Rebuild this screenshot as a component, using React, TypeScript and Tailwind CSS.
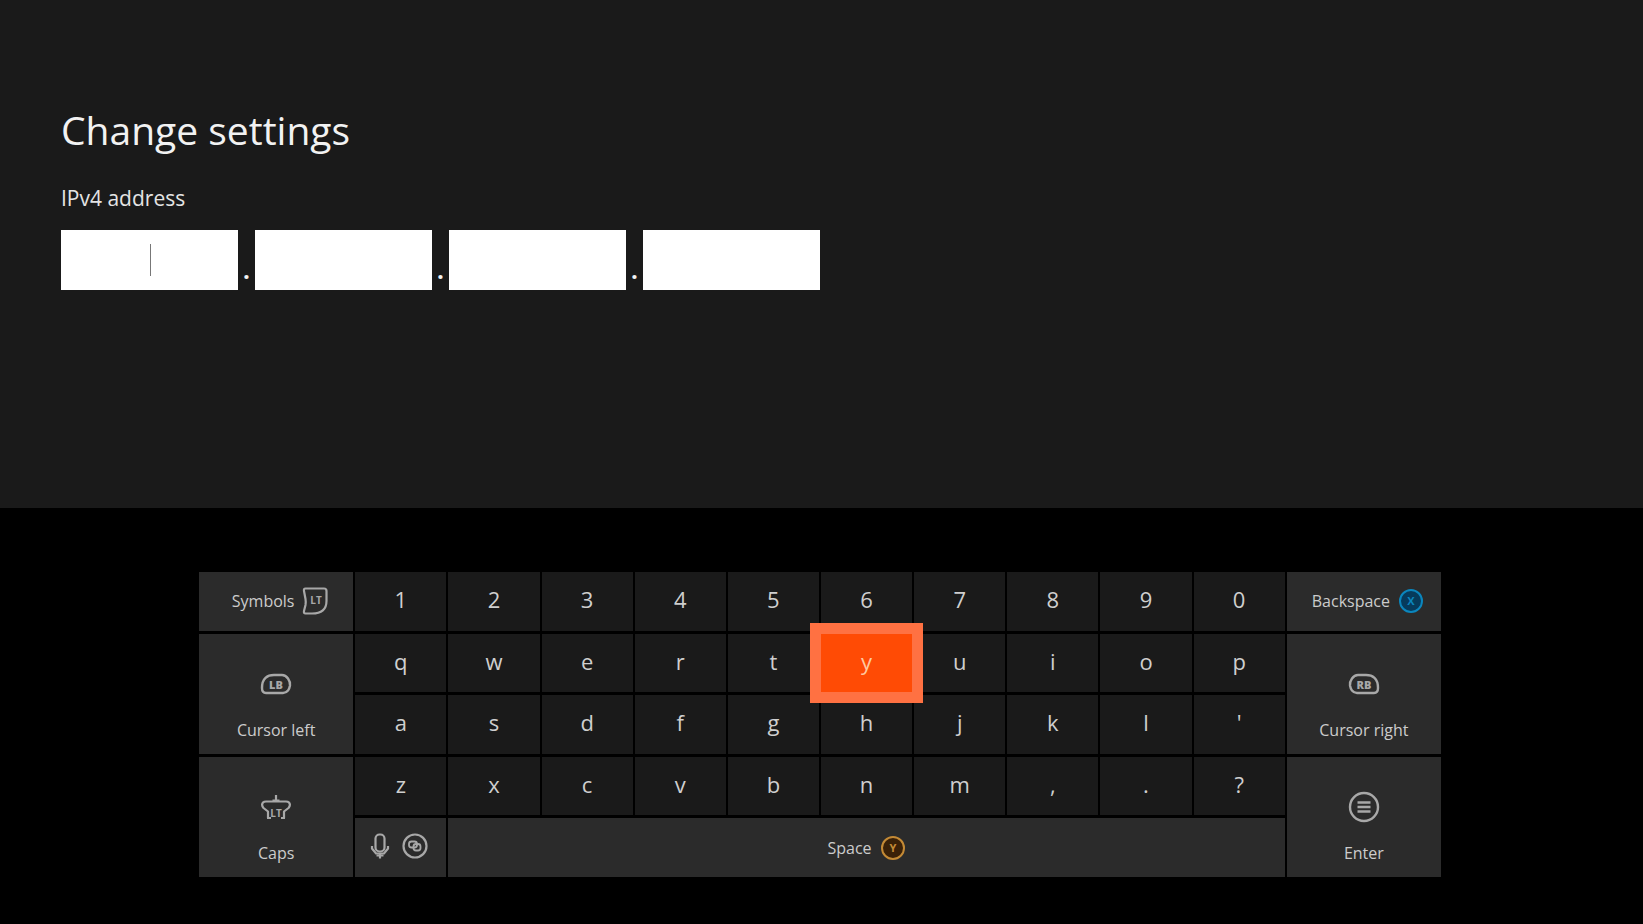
import { useState } from 'react';

const rows = [
  ['1', '2', '3', '4', '5', '6', '7', '8', '9', '0'],
  ['q', 'w', 'e', 'r', 't', 'y', 'u', 'i', 'o', 'p'],
  ['a', 's', 'd', 'f', 'g', 'h', 'j', 'k', 'l', "'"],
  ['z', 'x', 'c', 'v', 'b', 'n', 'm', ',', '.', '?'],
];

const sideKey = 'bg-[#2b2b2b] text-[#cccccc] text-[16px] leading-6 font-medium';
const tallKey = 'row-span-2 flex flex-col items-center justify-end gap-[18px] pb-3';

function LeftTrigger() {
  return (
    <svg width="26" height="28" viewBox="0 0 26 28" fill="none" stroke="#a8a8a8" strokeWidth="2.2" aria-hidden="true">
      <path d="M3.500 1.500H22Q24.500 1.500 24.500 4V14Q24.500 26.500 10 26.500H3.500Q1.500 26.500 2 24L3.500 18Q4 15 3.500 12L2 4Q1.500 1.500 3.500 1.500Z" />
      <text x="14" y="17" textAnchor="middle" fontSize="10" fontWeight="700" fill="#a8a8a8" stroke="none">LT</text>
    </svg>
  );
}

function Bumper({ label, flip }: { label: string; flip?: boolean }) {
  return (
    <svg width="32" height="32" viewBox="0 0 32 32" fill="none" stroke="#a8a8a8" strokeWidth="2.4" aria-hidden="true">
      <path
        transform={flip ? 'matrix(-1 0 0 1 32 0)' : undefined}
        d="M14 7H22Q25.500 7 28 10.500Q30.500 14 30 17.500Q29.500 20.500 28 22.500Q26 25 23 25H6Q2 25 2 20Q2 13 5.500 9.800Q8.500 7 14 7Z"
      />
      <text x="16" y="20.500" textAnchor="middle" fontSize="11" fontWeight="800" fill="#a8a8a8" stroke="none">{label}</text>
    </svg>
  );
}

function LeftStick() {
  return (
    <svg width="32" height="32" viewBox="0 0 32 32" fill="none" stroke="#a8a8a8" strokeWidth="2.2" strokeLinejoin="round" aria-hidden="true">
      <path d="M16 4V11M12.500 9.500H19.500" />
      <path d="M8 27V20.500L3.500 17Q1 14 3 11.500Q4 10.500 6 10.500H26Q28 10.500 29 11.500Q31 14 28.500 17L24 20.500V27" />
      <path d="M7 27H11M21 27H25" />
      <text x="16" y="26" textAnchor="middle" fontSize="10" fontWeight="700" fill="#a8a8a8" stroke="none">LT</text>
    </svg>
  );
}

function MenuButton() {
  return (
    <svg width="32" height="32" viewBox="0 0 32 32" fill="none" stroke="#a8a8a8" strokeWidth="2.4" aria-hidden="true">
      <circle cx="16" cy="16" r="14" />
      <path d="M9.500 11.500H22.500M9.500 16H22.500M9.500 20.500H22.500" />
    </svg>
  );
}

function Microphone() {
  return (
    <svg width="20" height="26" viewBox="0 0 20 26" fill="none" stroke="#a8a8a8" strokeWidth="2.2" aria-hidden="true">
      <rect x="5.500" y="1.500" width="9" height="17" rx="4" />
      <path d="M2 13V15.500L6 20.500H14L18 15.500V13" />
      <path d="M10 20V25.500M6.500 22.500H13.500" />
    </svg>
  );
}

function ViewButton() {
  return (
    <svg width="26" height="26" viewBox="0 0 26 26" fill="none" stroke="#a8a8a8" strokeWidth="2.2" aria-hidden="true">
      <circle cx="13" cy="13" r="11.500" />
      <rect x="7" y="8.500" width="8" height="6" rx="2.500" strokeWidth="1.800" />
      <rect x="11.500" y="11" width="7" height="6.500" rx="2.500" strokeWidth="1.800" />
    </svg>
  );
}

function FaceButton({ label, color, fill }: { label: string; color: string; fill: string }) {
  return (
    <svg width="26" height="26" viewBox="0 0 26 26" aria-hidden="true">
      <circle cx="13" cy="13" r="11" fill={fill} stroke={color} strokeWidth="2" />
      <text x="13" y="17" textAnchor="middle" fontSize="11" fontWeight="700" fill={color}>{label}</text>
    </svg>
  );
}

export default function App() {
  const [octets, setOctets] = useState(['', '', '', '']);
  const [selected, setSelected] = useState('y');
  const [active, setActive] = useState(0);

  const updateOctet = (index: number, value: string) => {
    setOctets(octets.map((octet, i) => (i === index ? value : octet)));
  };

  const pressKey = (key: string) => {
    setSelected(key);
    if (/\d/.test(key) && octets[active].length < 3) {
      updateOctet(active, octets[active] + key);
    }
  };

  return (
    <div className="min-h-screen flex flex-col bg-black font-['Segoe_UI','Open_Sans',sans-serif]">
      {/* Settings */}
      <main className="flex-1 bg-[#1a1a1a] px-[61px] pt-[104px] text-[#f2f2f2]">
        <h1 className="text-[39px] leading-[52px]">Change settings</h1>
        <fieldset className="mt-[30px]">
          <legend className="text-[21px] leading-6 mb-5 text-[#e4e4e4]">IPv4 address</legend>
          <div className="flex items-end">
            {octets.map((octet, index) => (
              <div key={index} className="flex items-end">
                <div className="relative">
                  <input
                    type="text"
                    inputMode="numeric"
                    maxLength={3}
                    aria-label={`IPv4 address part ${index + 1}`}
                    value={octet}
                    onFocus={() => setActive(index)}
                    onChange={(event) => updateOctet(index, event.target.value)}
                    className="block w-[177px] h-[60px] bg-white text-center text-[24px] text-black caret-transparent outline-none"
                  />
                  {active === index && octet === '' && (
                    <span className="absolute left-1/2 top-1/2 h-8 w-px -translate-y-1/2 bg-[#777777]" />
                  )}
                </div>
                {index < 3 && <span className="w-[17px] pb-2 text-center text-[24px] leading-6 font-bold">.</span>}
              </div>
            ))}
          </div>
        </fieldset>
      </main>

      {/* Keyboard */}
      <footer className="pt-16 pb-[47px] pl-[199px] pr-[202px]">
        <div className="grid h-[305px] grid-cols-[154fr_repeat(10,91fr)_154fr] grid-rows-5 gap-x-[2px] gap-y-[3px]">
          <button className={`${sideKey} flex items-center justify-center gap-2 pl-2`}>
            Symbols
            <LeftTrigger />
          </button>
          <div className="col-span-10 row-span-4 grid grid-cols-10 grid-rows-4 gap-x-[2px] gap-y-[3px]">
            {rows.flat().map((key) => (
              <button
                key={key}
                onClick={() => pressKey(key)}
                className={`pb-1 text-[22px] leading-7 font-medium ${
                  key === selected
                    ? 'relative z-10 bg-[#ff4b05] text-[#ffc9a0] ring-[11px] ring-[#ff7142]'
                    : 'bg-[#1a1a1a] text-[#cfcfcf]'
                }`}
              >
                {key}
              </button>
            ))}
          </div>
          <button className={`${sideKey} flex items-center justify-center gap-2 pl-2`}>
            Backspace
            <FaceButton label="X" color="#0b86bd" fill="#063b5c" />
          </button>
          <button className={`${sideKey} ${tallKey}`}>
            <Bumper label="LB" />
            Cursor left
          </button>
          <button className={`${sideKey} ${tallKey}`}>
            <Bumper label="RB" flip />
            Cursor right
          </button>
          <button className={`${sideKey} ${tallKey}`}>
            <LeftStick />
            Caps
          </button>
          <button className={`${sideKey} ${tallKey} col-start-12`}>
            <MenuButton />
            Enter
          </button>
          <button aria-label="Voice input" className={`${sideKey} col-start-2 row-start-5 flex items-center justify-center gap-3 pr-1 pb-1`}>
            <Microphone />
            <ViewButton />
          </button>
          <button className={`${sideKey} col-span-9 col-start-3 row-start-5 flex items-center justify-center gap-2`}>
            Space
            <FaceButton label="Y" color="#c48a35" fill="#3a2108" />
          </button>
        </div>
      </footer>
    </div>
  );
}
